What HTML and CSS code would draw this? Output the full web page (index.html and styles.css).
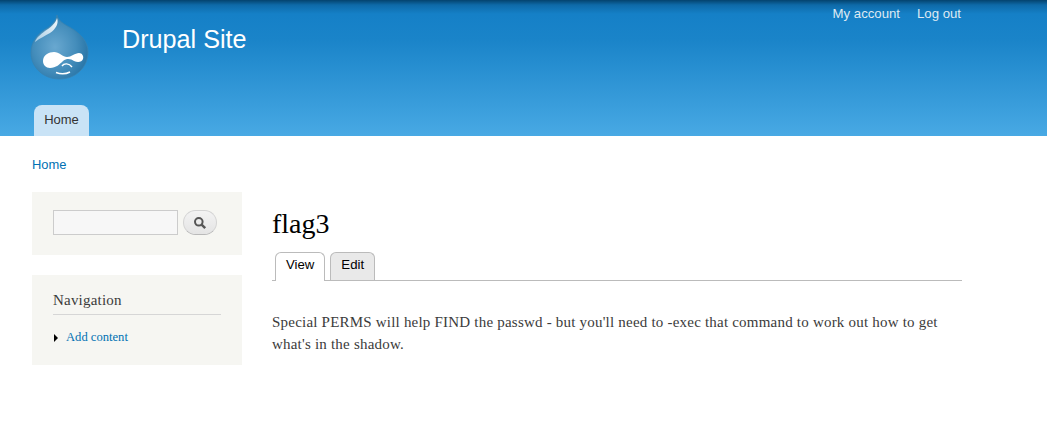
FILE: index.html
```html
<!DOCTYPE html>
<html>
<head>
	<title>flag3 | Drupal Site</title>
	<link rel="stylesheet" href="styles.css">
</head>
<body>
	<div class="header">
		<div class="header-top">
			<div class="branding">
				<svg class="logo" width="60" height="68" viewBox="0 0 60 68">
					<defs>
						<radialGradient id="drop" cx="0.42" cy="0.5" r="0.62">
							<stop offset="0" stop-color="#69a8d0"/>
							<stop offset="0.6" stop-color="#448dbb"/>
							<stop offset="1" stop-color="#2673a5"/>
						</radialGradient>
						<linearGradient id="shine" x1="1" y1="0" x2="0" y2="1">
							<stop offset="0" stop-color="#f2f8fc"/>
							<stop offset="1" stop-color="#a9cde4"/>
						</linearGradient>
					</defs>
					<path d="M27 2 C28 8 34 11 41 15 C51 21 58 29 58 39 C58 54 46 66 29.500 66 C13 66 1 54 1 40 C1 29 7 22 14 17 C20 14 26 9 27 2 Z" fill="url(#drop)" stroke="#3a83b0" stroke-width="0.800"/>
					<path d="M27 5 C26 10 20 15 15 18 C10 22 6 25 5 29 C10 25 15 23 20 20 C26 16 29 10 27 5 Z" fill="url(#shine)"/>
					<path d="M13 48 C13 42 19 39 24 39 C29 39 33 44 37 44 C41 44 45 40 49 40 C52 40 54 43 53 46 C52 49 48 50 44 48 C41 46 37 45 33 48 C30 51 26 55 20 55 C16 55 13 52 13 48 Z" fill="#fff"/>
					<path d="M26 59.500 C30 61 36 61 40 59" fill="none" stroke="#fff" stroke-width="1.600"/>
					<path d="M32 53 C34 50 39 50 42 54" fill="none" stroke="#fff" stroke-width="1.400"/>
				</svg>
				<div class="site-name">Drupal Site</div>
			</div>
			<ul class="secondary-menu">
				<li><a href="#">My account</a></li>
				<li><a href="#">Log out</a></li>
			</ul>
		</div>
		<ul class="main-menu">
			<li><a href="#">Home</a></li>
		</ul>
	</div>

	<div class="breadcrumb"><a href="#">Home</a></div>

	<div class="main">
		<div class="sidebar">
			<div class="block search-block">
				<input type="text" class="search-input">
				<button class="search-button">
					<svg width="14" height="14" viewBox="0 0 14 14">
						<circle cx="5.800" cy="5.800" r="3.800" fill="none" stroke="#555" stroke-width="2"/>
						<path d="M8.600 8.600 L12.200 12.200" stroke="#555" stroke-width="2.400"/>
					</svg>
				</button>
			</div>
			<div class="block nav-block">
				<h2>Navigation</h2>
				<ul class="nav-list">
					<li><a href="#">Add content</a></li>
				</ul>
			</div>
		</div>
		<div class="content">
			<h1>flag3</h1>
			<ul class="tabs">
				<li class="active"><a href="#">View</a></li>
				<li><a href="#">Edit</a></li>
			</ul>
			<p>Special PERMS will help FIND the passwd - but you'll need to -exec that command to work out how to get what's in the shadow.</p>
		</div>
	</div>
</body>
</html>
```

FILE: styles.css
```css
body {
	margin: 0;
	background-color: #fff;
	color: #3b3b3b;
	font-family: "Liberation Serif", serif;
	font-size: 15px;
	line-height: 1.5;
}
a {
	color: #0071b3;
	text-decoration: none;
}
ul {
	list-style: none;
	margin: 0;
	padding: 0;
}

/* Header */
.header {
	height: 136px;
	display: flex;
	flex-direction: column;
	justify-content: space-between;
	font-family: "Liberation Sans", sans-serif;
	background: linear-gradient(to bottom, #04436e 0, #0e6aa8 5px, #1580c7 14px, #1a84c9 40px, #48a9e4 100%);
}
.header-top {
	display: flex;
	justify-content: space-between;
	align-items: flex-start;
	padding: 0 86px 0 30px;
}
.branding {
	display: flex;
	align-items: flex-start;
	padding-top: 13px;
}
.logo {
	display: block;
}
.site-name {
	margin: 8px 0 0 32px;
	color: #fff;
	font-size: 25.200px;
	line-height: 36px;
}
.secondary-menu {
	display: flex;
	gap: 17px;
	padding-top: 4px;
	font-size: 13.200px;
	line-height: 20px;
}
.secondary-menu a {
	color: #dfeaf3;
}
.main-menu {
	padding-left: 34px;
	font-size: 13px;
}
.main-menu a {
	display: block;
	width: 55px;
	height: 31px;
	box-sizing: border-box;
	padding-top: 5px;
	text-align: center;
	color: #333;
	background-color: #c9e3f6;
	border-radius: 8px 8px 0 0;
}

.breadcrumb {
	padding: 19px 32px 0;
	font-family: "Liberation Sans", sans-serif;
	font-size: 12.900px;
	line-height: 20px;
}

/* Columns */
.main {
	display: flex;
	padding: 17px 85px 0 32px;
}
.sidebar {
	width: 210px;
	flex: none;
	margin-right: 30px;
}
.block {
	background-color: #f6f6f2;
	box-sizing: border-box;
	padding: 18px 21px 0;
}
.search-block {
	display: flex;
	height: 63px;
	margin-bottom: 20px;
}
.search-input {
	width: 125px;
	height: 25px;
	box-sizing: border-box;
	padding: 2px;
	margin: 0 5px 0 0;
	background-color: #f7f7f7;
	border: 1px solid #ccc;
}
.search-button {
	width: 34px;
	height: 25px;
	padding: 0;
	display: flex;
	align-items: center;
	justify-content: center;
	background: linear-gradient(to bottom, #f3f3f3, #e4e4e4);
	border: 1px solid #d4d4d4;
	border-bottom-color: #b9b9b9;
	border-radius: 13px;
}
.nav-block {
	height: 90px;
	padding-top: 15px;
}
.nav-block h2 {
	margin: 0 0 13px;
	padding-bottom: 3px;
	border-bottom: 1px solid #d6d6d6;
	font-size: 15px;
	font-weight: normal;
	letter-spacing: 0.200px;
	line-height: 21px;
	color: #3b3b3b;
}
.nav-list li {
	display: flex;
	align-items: center;
	font-size: 12.600px;
	line-height: 19px;
}
.nav-list li::before {
	content: "";
	margin: 0 8px 0 1px;
	border-left: 4px solid #000;
	border-top: 4px solid transparent;
	border-bottom: 4px solid transparent;
}

/* Content */
.content {
	flex: 1;
	padding-top: 13px;
}
.content h1 {
	margin: 0;
	font-size: 28px;
	font-weight: normal;
	line-height: 38px;
	color: #000;
}
.tabs {
	display: flex;
	gap: 5px;
	height: 28px;
	padding-left: 3px;
	margin-top: 9px;
	border-bottom: 1px solid #bbb;
	font-family: "Liberation Sans", sans-serif;
	font-size: 13.200px;
}
.tabs a {
	display: block;
	height: 28px;
	box-sizing: border-box;
	padding: 2px 10px 0;
	color: #000;
	background-color: #e9e9e9;
	border: 1px solid #bbb;
	border-bottom: 0;
	border-radius: 6px 6px 0 0;
}
.tabs .active a {
	height: 29px;
	background-color: #fff;
}
.content p {
	margin: 30px 0 0;
	letter-spacing: 0.210px;
	line-height: 22px;
}
```
